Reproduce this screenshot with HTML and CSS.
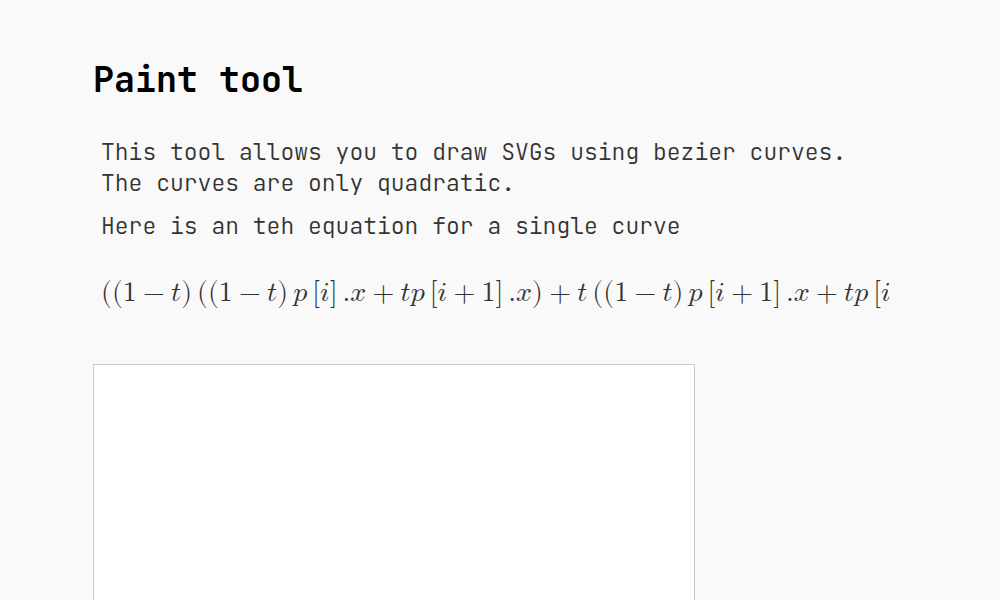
FILE: index.html
```html
<!DOCTYPE html>
<html lang="en">
<head>
<meta charset="utf-8">
<meta name="viewport" content="width=device-width, initial-scale=1">
<title>Paint tool</title>
<link rel="stylesheet" href="styles.css">
</head>
<body>
<main class="page">
  <h1 class="title">Paint tool</h1>
  <section class="intro">
    <p class="text">This tool allows you to draw SVGs using bezier curves.<br>The curves are only quadratic.</p>
    <p class="text">Here is an teh equation for a single curve</p>
    <div class="equation">
      <math>
        <mrow>
          <mtext>((</mtext><mn>1</mn><mo form="infix">−</mo><mi>t</mi><mtext>)</mtext><mspace class="thin"/>
          <mtext>((</mtext><mn>1</mn><mo form="infix">−</mo><mi>t</mi><mtext>)</mtext><mspace class="thin"/>
          <mi>p</mi><mspace class="thin"/><mtext>[</mtext><mi>i</mi><mtext>]</mtext><mspace class="thin"/><mtext>.</mtext><mi>x</mi>
          <mo form="infix">+</mo>
          <mi>t</mi><mi>p</mi><mspace class="thin"/><mtext>[</mtext><mi>i</mi><mo form="infix">+</mo><mn>1</mn><mtext>]</mtext><mspace class="thin"/><mtext>.</mtext><mi>x</mi><mtext>)</mtext>
          <mo form="infix">+</mo>
          <mi>t</mi><mspace class="thin"/><mtext>((</mtext><mn>1</mn><mo form="infix">−</mo><mi>t</mi><mtext>)</mtext><mspace class="thin"/>
          <mi>p</mi><mspace class="thin"/><mtext>[</mtext><mi>i</mi><mo form="infix">+</mo><mn>1</mn><mtext>]</mtext><mspace class="thin"/><mtext>.</mtext><mi>x</mi>
          <mo form="infix">+</mo>
          <mi>t</mi><mi>p</mi><mspace class="thin"/><mtext>[</mtext><mi>i</mi>
        </mrow>
      </math>
    </div>
  </section>
  <svg class="canvas" role="img" aria-label="Drawing area"></svg>
</main>
</body>
</html>
```
FILE: styles.css
```css
* { box-sizing: border-box; }
body {
  margin: 0;
  background: #f9f9f9;
  color: #333;
}
.page {
  padding: 56px 93px 0;
}
.title {
  margin: 0;
  font: 600 35px/48px "JetBrains Mono", "Liberation Mono", monospace;
  color: #000;
}
.intro {
  padding: 33px 8px 0;
}
.text {
  margin: 0 0 12px;
  font: 300 23px/31px "JetBrains Mono", "Liberation Mono", monospace;
}
.equation {
  height: 82px;
  padding-top: 17px;
  font: 28px/42px "Latin Modern Math", "Liberation Serif", serif;
  white-space: nowrap;
}
.equation math {
  font-family: "Latin Modern Math", "Liberation Serif", serif;
}
.thin { margin-left: 5px; }
.canvas {
  display: block;
  width: 100%;
  max-width: 602px;
  height: 402px;
  margin-top: 28px;
  border: 1px solid #ccc;
  background: #fff;
}
```
